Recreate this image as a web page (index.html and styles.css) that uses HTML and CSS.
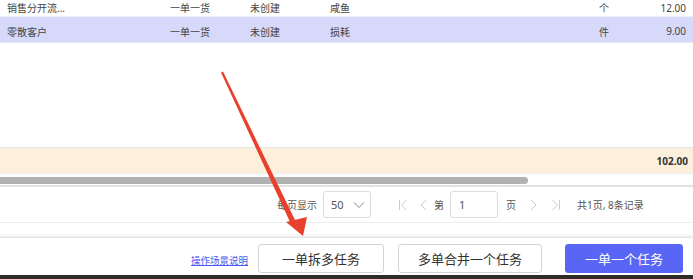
FILE: index.html
```html
<!DOCTYPE html>
<html lang="zh-CN">
  <head>
    <meta charset="UTF-8" />
    <title>任务</title>
    <link rel="stylesheet" href="styles.css">
  </head>
  <body>
    <div class="page">
      <section class="table">
        <div class="row first">
          <span class="c-name">销售分开流...</span>
          <span class="c-mode">一单一货</span>
          <span class="c-state">未创建</span>
          <span class="c-goods">咸鱼</span>
          <span class="c-unit">个</span>
          <span class="c-amount">12.00</span>
        </div>
        <div class="row picked">
          <span class="c-name">零散客户</span>
          <span class="c-mode">一单一货</span>
          <span class="c-state">未创建</span>
          <span class="c-goods">损耗</span>
          <span class="c-unit">件</span>
          <span class="c-amount">9.00</span>
        </div>
      </section>

      <div class="sum">102.00</div>
      <div class="scroll"><div class="thumb"></div></div>

      <nav class="pager">
        <span>每页显示</span>
        <div class="select">50
          <svg width="12" height="8" viewBox="0 0 12 8"><path d="M1 1.5l5 5 5-5" fill="none" stroke="#888" stroke-width="1"/></svg>
        </div>
        <svg class="pg-ico first-ico" width="10" height="12" viewBox="0 0 10 12"><path d="M1.5 1v10M8.5 1L3.5 6l5 5" fill="none" stroke="#ccc" stroke-width="1"/></svg>
        <svg class="pg-ico" width="10" height="12" viewBox="0 0 10 12"><path d="M7 1L2 6l5 5" fill="none" stroke="#ccc" stroke-width="1"/></svg>
        <span>第</span>
        <div class="page-input">1</div>
        <span>页</span>
        <svg class="pg-ico" width="10" height="12" viewBox="0 0 10 12"><path d="M3 1l5 5-5 5" fill="none" stroke="#ccc" stroke-width="1"/></svg>
        <svg class="pg-ico last-ico" width="10" height="12" viewBox="0 0 10 12"><path d="M1.5 1l5 5-5 5M8.5 1v10" fill="none" stroke="#ccc" stroke-width="1"/></svg>
        <span class="total">共1页, 8条记录</span>
      </nav>

      <footer class="actions">
        <a class="help" href="#">操作场景说明</a>
        <button class="btn split">一单拆多任务</button>
        <button class="btn merge">多单合并一个任务</button>
        <button class="btn primary">一单一个任务</button>
      </footer>
      <div class="taskbar"></div>

      <!-- 红色标注箭头 -->
      <svg class="arrow" width="693" height="279" viewBox="0 0 693 279">
        <path d="M221 72.5L223 71.5L295 220L290 222Z" fill="#e8402c"/>
        <path d="M286 222L307 217L303 236Z" fill="#e8402c"/>
      </svg>
    </div>
  </body>
</html>
```

FILE: styles.css
```css
* {
  padding: 0;
  margin: 0;
  box-sizing: border-box;
}

body {
  background: #fff;
  font-family: "Noto Sans", "Noto Sans CJK SC", sans-serif;
  color: #444;
  font-size: 10px;
}

.page {
  position: relative;
  width: 693px;
  height: 279px;
  overflow: hidden;
  display: flex;
  flex-direction: column;
}

/* 表格 */

.table {
  height: 147px;
  flex-shrink: 0;
}

.row {
  display: grid;
  grid-template-columns: 163px 80px 80px 269px 50px 1fr;
  height: 26px;
  align-items: center;
  padding: 3px 7px 0 7px;
  border-bottom: 1px solid #eef0f3;
}

.row.first {
  height: 17px;
  padding: 0 7px 3px 7px;
}

.row.picked {
  background: #d6d9fa;
  border-bottom-color: #e6e8f6;
}

.c-amount {
  text-align: right;
}

.sum {
  height: 27px;
  flex-shrink: 0;
  background: #fcf0dd;
  border-top: 1px solid #e6e6e6;
  border-bottom: 1px solid #eee;
  display: flex;
  align-items: center;
  justify-content: flex-end;
  padding-right: 5px;
  font-weight: 700;
  color: #333;
}

.scroll {
  height: 13px;
  flex-shrink: 0;
  padding-top: 3px;
  border-bottom: 2px solid #e2e2e2;
}

.thumb {
  width: 528px;
  height: 7px;
  background: #b1b1b1;
  border-radius: 0 4px 4px 0;
}

/* 分页 */

.pager {
  height: 36px;
  flex-shrink: 0;
  display: flex;
  align-items: center;
  padding-left: 277px;
  border-bottom: 1px solid #eee;
  color: #555;
}

.select {
  width: 48px;
  height: 27px;
  margin-left: 6px;
  border: 1px solid #dcdcdc;
  border-radius: 3px;
  display: flex;
  align-items: center;
  justify-content: space-between;
  padding: 0 5px 0 7px;
  font-size: 11px;
}

.pg-ico {
  margin-left: 12px;
}

.pg-ico.first-ico {
  margin-left: 27px;
}

.pg-ico + .pg-ico {
  margin-left: 11px;
}

.pg-ico.last-ico {
  margin-left: 13px;
}

.pager .pg-ico + span {
  margin-left: 5px;
}

.page-input {
  width: 48px;
  height: 27px;
  margin: 0 8px 0 6px;
  border: 1px solid #dcdcdc;
  border-radius: 3px;
  display: flex;
  align-items: center;
  padding-left: 8px;
  font-size: 11px;
}

.pager .pg-ico + .total {
  margin-left: 16px;
}

/* 底部按钮 */

.actions {
  margin-top: 14px;
  height: 38px;
  flex-shrink: 0;
  display: flex;
  align-items: center;
  padding-left: 191px;
  box-shadow: 0 -2px 2px rgba(0, 0, 0, 0.06);
  border-top: 1px solid #e4e4e4;
}

.help {
  color: #4b59ee;
  font-size: 9.5px;
  margin-top: 6px;
}

.btn {
  height: 29px;
  margin-top: 4px;
  border: 1px solid #d4d4d4;
  border-radius: 3px;
  background: #fff;
  font-family: "Noto Sans", "Noto Sans CJK SC", sans-serif;
  font-size: 13px;
  color: #333;
}

.split {
  width: 126px;
  margin-left: 10px;
}

.merge {
  width: 144px;
  margin-left: 14px;
}

.primary {
  width: 118px;
  margin-left: 23px;
  background: #5965f4;
  border-color: #5965f4;
  color: #fff;
}

.taskbar {
  flex: 1;
  background: #2e2b29;
}

.arrow {
  position: absolute;
  left: 0;
  top: 0;
  pointer-events: none;
}
```
